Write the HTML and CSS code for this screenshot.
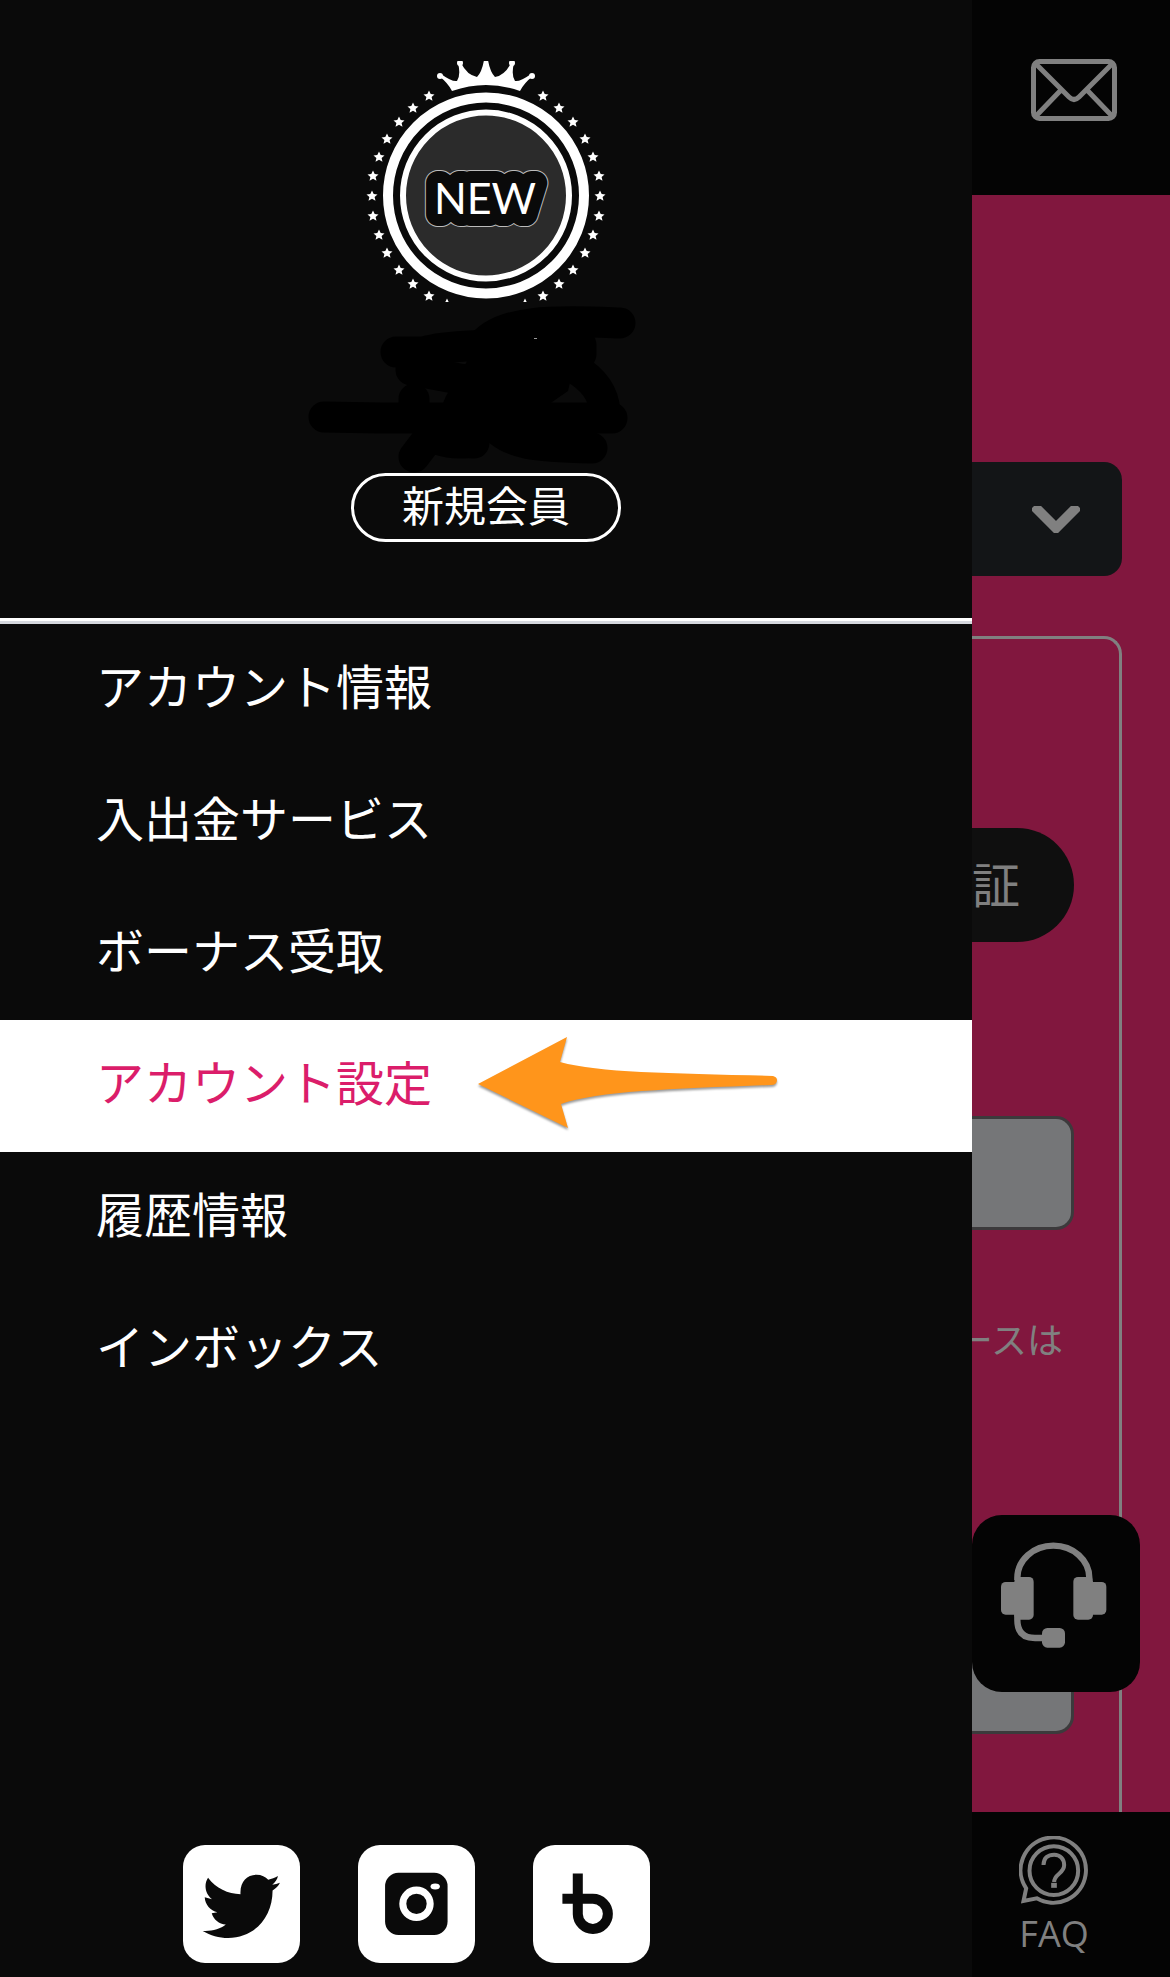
FILE: index.html
```html
<!DOCTYPE html>
<html lang="ja">
<head>
<meta charset="utf-8">
<meta name="viewport" content="width=device-width, initial-scale=1">
<title>アカウント設定</title>
<link rel="stylesheet" href="styles.css">
</head>
<body>
<div class="layout">
  <aside class="drawer">
    <section class="profile">
      <svg class="badge" viewBox="0 0 240 241" role="img" aria-label="NEW">
        <defs>
          <path id="star" d="M0-5.500 1.700-2 5.500-1.600 2.600.9 3.500 4.800 0 2.800-3.500 4.800-2.600.9-5.500-1.600-1.700-2Z"/>
        </defs>
        <g fill="#fff">
          <path d="M86 30 Q82 22 73 15 L75 13 Q86 21 91 20 Q95 14 92 2 L95 2 Q101 14 111 16 Q116 11 118-1 H122 Q124 11 129 16 Q139 14 145 2 L148 2 Q145 14 149 20 Q154 21 165 13 L167 15 Q158 22 154 30 Q120 18 86 30Z"/>
          <circle cx="74" cy="15" r="3"/><circle cx="94" cy="2" r="3"/><circle cx="146" cy="2" r="3"/><circle cx="166" cy="15" r="3"/>
          <use href="#star" x="63" y="35"/><use href="#star" x="177" y="35"/>
          <use href="#star" x="47" y="47"/><use href="#star" x="193" y="47"/>
          <use href="#star" x="33" y="61"/><use href="#star" x="207" y="61"/>
          <use href="#star" x="21" y="78"/><use href="#star" x="219" y="78"/>
          <use href="#star" x="13" y="96"/><use href="#star" x="227" y="96"/>
          <use href="#star" x="7" y="115"/><use href="#star" x="233" y="115"/>
          <use href="#star" x="6" y="135"/><use href="#star" x="234" y="135"/>
          <use href="#star" x="7" y="155"/><use href="#star" x="233" y="155"/>
          <use href="#star" x="13" y="174"/><use href="#star" x="227" y="174"/>
          <use href="#star" x="21" y="192"/><use href="#star" x="219" y="192"/>
          <use href="#star" x="33" y="209"/><use href="#star" x="207" y="209"/>
          <use href="#star" x="47" y="223"/><use href="#star" x="193" y="223"/>
          <use href="#star" x="63" y="235"/><use href="#star" x="177" y="235"/>
          <use href="#star" x="81" y="243"/><use href="#star" x="159" y="243"/>
        </g>
        <circle cx="120" cy="134.500" r="98" fill="none" stroke="#fff" stroke-width="10"/>
        <circle cx="120" cy="134.500" r="83" fill="#2b2b2b" stroke="#fff" stroke-width="6"/>
        <g class="badge-text">
          <text class="badge-rim" x="119" y="153">NEW</text>
          <text class="badge-edge" x="119" y="153">NEW</text>
          <text x="119" y="153">NEW</text>
        </g>
      </svg>
      <svg class="scribble" viewBox="316 302 340 171" aria-hidden="true">
        <g fill="none" stroke="#000" stroke-width="31" stroke-linecap="round" stroke-linejoin="round">
          <path d="M620 323C565 321 500 317 480 348"/>
          <path d="M396 352H424C450 344 500 345 581 345V354"/>
          <path d="M411 370 470 381 540 375 572 362"/>
          <path d="M574 368C595 380 604 395 605 412"/>
          <path d="M414 399V412M324 417 380 418 612 418"/>
          <path d="M414 457 430 436C450 446 460 442 474 443V425"/>
          <path d="M490 420C505 446 540 447 592 448"/>
        </g>
        <path d="M446 396 480 340H580L568 391 555 400 520 425H443V403Z"/>
        <rect x="534" y="338" width="3" height="1" fill="#999"/>
      </svg>
      <span class="rank">新規会員</span>
    </section>
    <nav class="menu">
      <a class="item" href="#info">アカウント情報</a>
      <a class="item" href="#cashier">入出金サービス</a>
      <a class="item" href="#bonus">ボーナス受取</a>
      <a class="item active" href="#settings" aria-current="page">アカウント設定
        <svg class="arrow" viewBox="478 1036 302 96" aria-hidden="true"><path fill="#ff951b" d="M478 1084 567 1037 560 1062C600 1073 670 1073 773 1076Q777 1077 777 1080Q777 1085 771 1085C670 1089 600 1091 561 1104L568 1128Z"/></svg>
      </a>
      <a class="item" href="#history">履歴情報</a>
      <a class="item" href="#inbox">インボックス</a>
    </nav>
    <div class="socials">
      <a class="social" href="#twitter" aria-label="Twitter"><svg viewBox="0 0 350 352"><path d="M59 257C85 259 112 251 128 238 108 236 91 223 86 204L103 201C82 196 66 178 65 156L87 162C67 147 61 119 75 98 98 129 135 147 172 147 170 110 192 89 220 89 235 89 247 95 255 104 265 102 275 98 284 93 283 102 276 112 267 119 275 118 283 116 290 113 286 122 278 130 268 136 268 215 215 278 135 278 108 278 82 270 59 257Z"/></svg></a>
      <a class="social" href="#instagram" aria-label="Instagram"><svg viewBox="0 0 350 352"><rect x="81" y="83" width="187" height="186" rx="40"/><circle cx="175" cy="176" r="41" fill="none" stroke="#fff" stroke-width="21"/><ellipse cx="231" cy="124" rx="14" ry="9" fill="#fff"/></svg></a>
      <a class="social" href="#blog" aria-label="Blog"><svg viewBox="0 0 350 352"><path d="M134 85V207A45 45 0 1 0 179 161H88" fill="none" stroke="#0a0a0a" stroke-width="30"/></svg></a>
    </div>
  </aside>

  <div class="page">
    <header class="topbar">
      <a class="mail" href="#mail" aria-label="メール">
        <svg viewBox="0 0 86 62" fill="none" stroke="#808080" stroke-width="5"><rect x="2.500" y="2.500" width="81" height="57" rx="6"/><path d="M5 5 38 38Q43 43 48 38L81 5M5 57 30 31M81 57 56 31"/></svg>
      </a>
    </header>
    <main class="content">
      <div class="picker">
        <select aria-label="メニュー"><option></option></select>
        <svg class="chevron" viewBox="0 0 48 27" aria-hidden="true"><path d="M2 0 24 22 46 0" fill="none" stroke="#808080" stroke-width="10"/></svg>
      </div>
      <form class="panel">
        <button class="verify" type="button">証</button>
        <input class="field" type="text" aria-label="入力1">
        <p class="note">ースは</p>
        <input class="field" type="text" aria-label="入力2">
      </form>
    </main>
    <footer class="bottombar">
      <a class="faq" href="#faq">
        <svg viewBox="177 168 209 210" fill="none" stroke="#808080" stroke-width="12"><path d="M198 325A98 98 0 1 1 230 355L190 363Z"/><circle cx="281" cy="272" r="73"/><path d="M250 255C250 233 264 224 282 224 300 224 312 237 312 255 312 282 282 280 282 306"/><path d="M273 316H290" stroke-width="15"/></svg>
        FAQ
      </a>
    </footer>
    <button class="support" type="button" aria-label="サポート">
      <svg viewBox="36 105 504 531" fill="#808080"><path d="M172 300V294A108 97 0 0 1 388 294V300M172 400V420Q172 474 225 474H252" fill="none" stroke="#808080" stroke-width="19"/><rect x="123" y="306" width="75" height="98" rx="14"/><rect x="163" y="291" width="58" height="128" rx="14"/><rect x="364" y="306" width="75" height="98" rx="14"/><rect x="340" y="291" width="59" height="128" rx="14"/><rect x="246" y="444" width="69" height="59" rx="16"/></svg>
    </button>
  </div>
</div>
</body>
</html>
```
FILE: styles.css
```css
* { box-sizing: border-box; }

body {
  margin: 0;
  background: #0a0a0a;
  color: #fff;
  font-family: "Noto Sans CJK JP", sans-serif;
}

a { color: inherit; text-decoration: none; }
svg { display: block; }

.layout {
  display: grid;
  grid-template-columns: minmax(0, 1fr) 198px;
  min-height: 100vh;
}

/* Drawer */
.drawer {
  display: flex;
  flex-direction: column;
  background: #0a0a0a;
}

.profile {
  display: flex;
  flex-direction: column;
  align-items: center;
  padding: 61px 0 76px;
  border-bottom: 3px solid #fff;
}

.badge { width: 240px; height: 241px; }

.badge-text {
  fill: #fff;
  font-family: Lato, sans-serif;
  font-size: 43px;
  text-anchor: middle;
  stroke-linejoin: round;
}

.badge-rim { stroke: #bbb; stroke-width: 26px; }
.badge-edge { stroke: #0a0a0a; stroke-width: 24px; }
.scribble { width: 340px; height: 171px; overflow: visible; }

.rank {
  width: 270px;
  height: 69px;
  border: 3px solid #fff;
  border-radius: 35px;
  font-size: 42px;
  line-height: 56px;
  text-align: center;
}

.menu { border-top: 3px solid #d5d8de; }

.item {
  display: block;
  position: relative;
  height: 132px;
  padding-left: 96px;
  font-size: 48px;
  line-height: 120px;
}

.active { background: #fff; color: #db1d6a; }

.arrow {
  position: absolute;
  left: 478px;
  top: 16px;
  width: 302px;
  height: 96px;
  overflow: visible;
  filter: drop-shadow(0 2px 1px rgba(0, 0, 0, 0.4));
}

.socials {
  display: flex;
  gap: 58px;
  margin-top: auto;
  padding: 0 0 14px 183px;
}

.social {
  width: 117px;
  height: 118px;
  border-radius: 22px;
  background: #fff;
  fill: #0a0a0a;
}

/* Dimmed page behind the drawer */
.page {
  position: relative;
  display: flex;
  flex-direction: column;
  overflow: hidden;
  background: #81173e;
  color: #808080;
}

.topbar {
  height: 195px;
  padding: 59px 53px 0 0;
  background: #040404;
}

.mail svg { width: 86px; height: 62px; margin-left: auto; }

.content {
  display: flex;
  flex: 1;
  flex-direction: column;
  padding: 267px 48px 0 0;
}

.picker { display: grid; align-items: center; }
.picker > * { grid-area: 1 / 1; }

.picker select {
  appearance: none;
  width: 100%;
  height: 114px;
  border: 0;
  border-radius: 0 18px 18px 0;
  background: #131517;
}

.chevron {
  width: 48px;
  height: 27px;
  margin-right: 42px;
  justify-self: end;
  pointer-events: none;
}

.panel {
  display: flex;
  flex: 1;
  flex-direction: column;
  margin-top: 60px;
  padding: 189px 45px 78px 0;
  border: 3px solid #808080;
  border-width: 3px 3px 0 0;
  border-radius: 0 18px 0 0;
}

.verify {
  height: 114px;
  padding: 0 54px 6px 0;
  border: 0;
  border-radius: 0 57px 57px 0;
  background: #0f0f0f;
  color: inherit;
  font: inherit;
  font-size: 48px;
  text-align: right;
}

.field {
  width: 100%;
  height: 114px;
  border: 3px solid #3c3a3c;
  border-left: 0;
  border-radius: 0 18px 18px 0;
  background: #757678;
}

.verify + .field { margin-top: 174px; }

.note {
  display: flex;
  justify-content: flex-end;
  margin: 78px 11px 252px 0;
  font-size: 36px;
  line-height: 60px;
  white-space: nowrap;
}

.bottombar {
  display: flex;
  justify-content: flex-end;
  height: 165px;
  padding: 24px 81px 0 0;
  background: #040404;
}

.faq {
  display: flex;
  flex-direction: column;
  align-items: center;
  width: 70px;
  font-family: "Open Sans", sans-serif;
  font-size: 36px;
  line-height: 56px;
}

.faq svg { width: 70px; height: 70px; }

.support {
  position: absolute;
  right: 30px;
  bottom: 285px;
  width: 168px;
  height: 177px;
  padding: 0;
  border: 0;
  border-radius: 30px;
  background: #040404;
}
```
